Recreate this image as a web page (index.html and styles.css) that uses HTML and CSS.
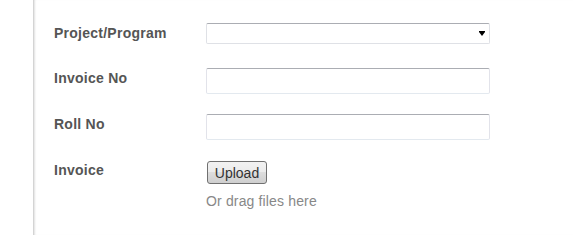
FILE: index.html
```html
<!DOCTYPE html>
<html>
<head>
<meta charset="utf-8">
<link rel="stylesheet" href="styles.css">
</head>
<body>
<div class="page">
  <form class="form">
    <div class="row row--select">
      <label class="label">Project/Program</label>
      <div class="select-wrap">
        <select class="select"><option></option></select>
      </div>
    </div>
    <div class="row">
      <label class="label">Invoice No</label>
      <input class="input" type="text">
    </div>
    <div class="row row--roll">
      <label class="label">Roll No</label>
      <input class="input" type="text">
    </div>
    <div class="row">
      <label class="label label--file">Invoice</label>
      <div class="upload">
        <button type="button" class="btn">Upload</button>
        <div class="drag">Or drag files here</div>
      </div>
    </div>
  </form>
</div>
</body>
</html>
```
FILE: styles.css
```css
html, body {
  margin: 0;
  padding: 0;
  background: #fff;
}
body {
  font-family: "Liberation Sans", Arial, sans-serif;
  font-size: 14px;
  color: #555;
}
.page {
  margin-left: 33px;
  min-height: 235px;
  border-left: 1px solid #d4d4d4;
  box-shadow: inset 2px 0 2px -1px rgba(0, 0, 0, 0.12);
  padding: 23px 0 0 20px;
  box-sizing: border-box;
}
.form {
  display: flex;
  flex-direction: column;
}
.row {
  display: flex;
  align-items: flex-start;
  margin-bottom: 20px;
}
.row--select {
  margin-bottom: 24px;
}
.row--roll {
  margin-bottom: 21px;
}
.label {
  width: 152px;
  flex: none;
  font-weight: bold;
  font-size: 14px;
  line-height: 16px;
  letter-spacing: 0.25px;
  color: #555;
  padding-top: 2px;
}
.label--file {
  padding-top: 1px;
}
.select-wrap {
  position: relative;
  width: 284px;
  height: 21px;
}
.select {
  appearance: none;
  -webkit-appearance: none;
  width: 284px;
  height: 21px;
  margin: 0;
  box-sizing: border-box;
  border: 1px solid #dfe1e6;
  border-top-color: #abadb3;
  border-radius: 2px;
  background: #fff;
  font-family: inherit;
  font-size: 13px;
}
.select-wrap::after {
  content: "";
  position: absolute;
  right: 5px;
  top: 9px;
  width: 0;
  height: 0;
  border-left: 3.5px solid transparent;
  border-right: 3.5px solid transparent;
  border-top: 4px solid #000;
  box-shadow: 0 -1px 0 0 #000;
}
.input {
  width: 284px;
  height: 26px;
  margin: 0;
  box-sizing: border-box;
  border: 1px solid #e2e3ea;
  border-top-color: #abadb3;
  border-bottom-color: #e3e9ef;
  border-radius: 2px;
  background: #fff;
  font-family: inherit;
  font-size: 14px;
  padding: 2px 6px;
}
.upload {
  display: flex;
  flex-direction: column;
  align-items: flex-start;
  padding-left: 1px;
}
.btn {
  width: 60px;
  height: 23px;
  margin: 0;
  padding: 0;
  box-sizing: border-box;
  border: 1px solid #707070;
  border-radius: 3px;
  background: linear-gradient(#f2f2f2 0%, #ebebeb 50%, #dddddd 50%, #cfcfcf 100%);
  font-family: inherit;
  font-size: 14px;
  color: #333;
  line-height: 20px;
}
.drag {
  margin-top: 9px;
  margin-left: -1px;
  font-size: 14px;
  line-height: 16px;
  letter-spacing: 0.15px;
  color: #888;
}
```
